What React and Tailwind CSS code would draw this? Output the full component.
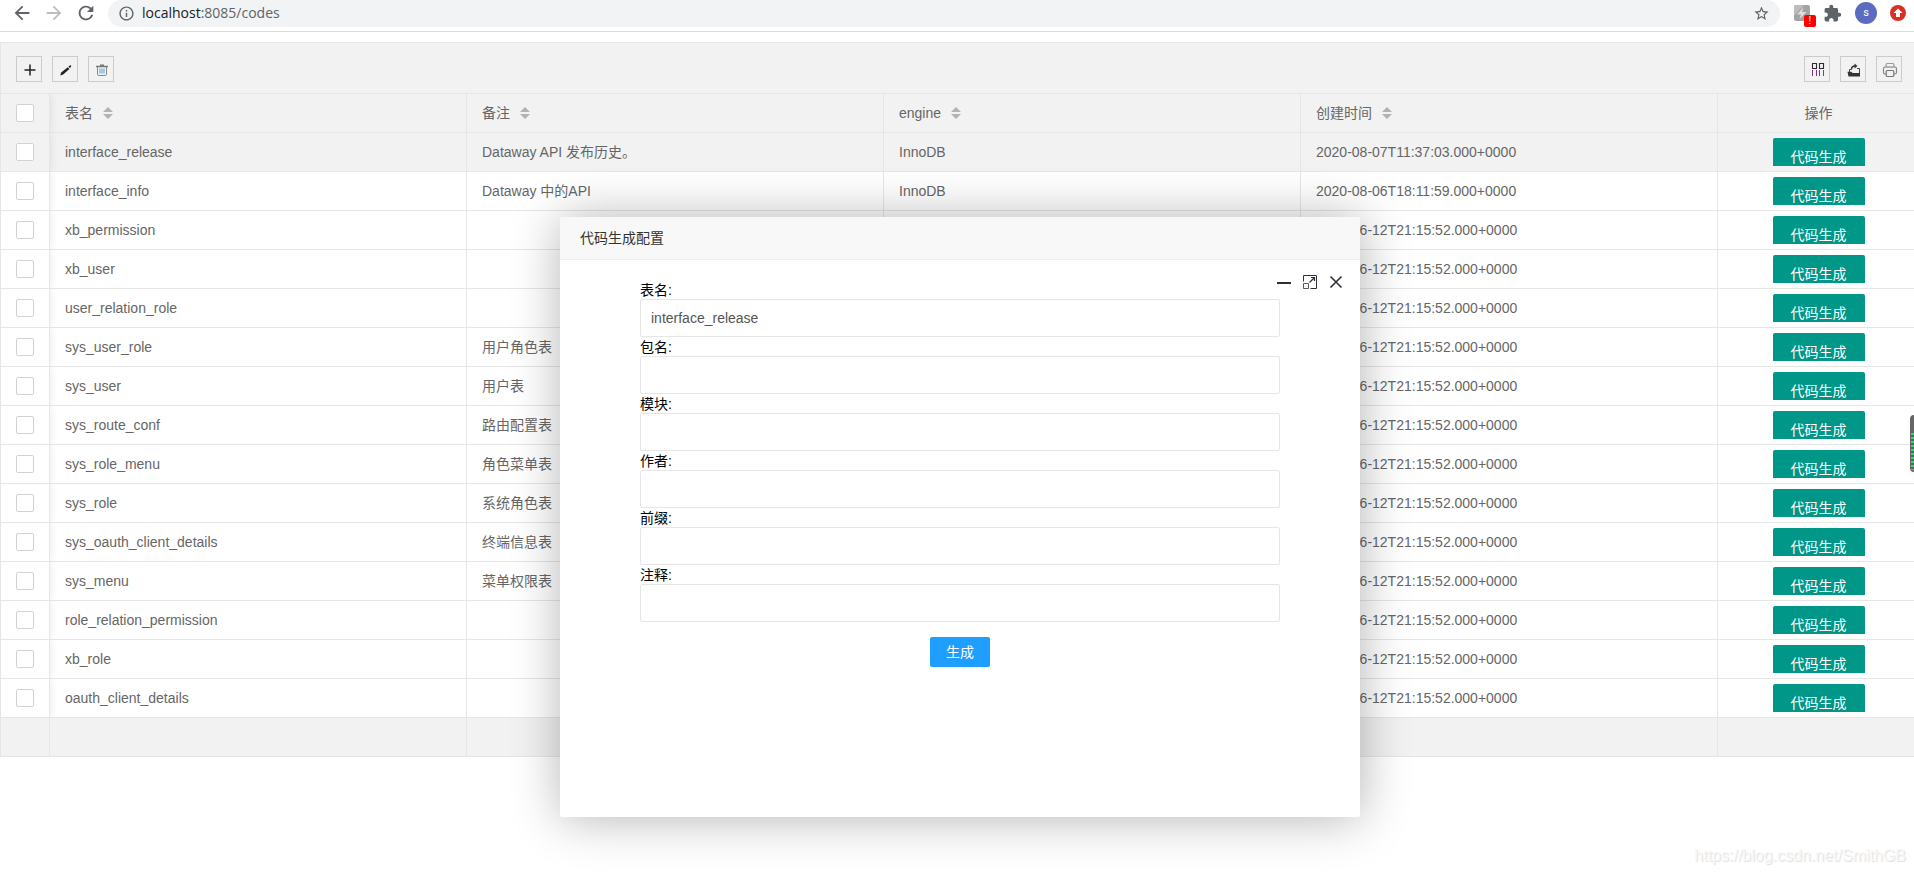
import React, { useState } from "react";
import {
  MdArrowBack,
  MdArrowForward,
  MdExtension,
  MdInfoOutline,
  MdRefresh,
  MdStarBorder,
} from "react-icons/md";

const OLD_TIME = "2020-06-12T21:15:52.000+0000";

const tables = [
  { name: "interface_release", comment: "Dataway API 发布历史。", time: "2020-08-07T11:37:03.000+0000" },
  { name: "interface_info", comment: "Dataway 中的API", time: "2020-08-06T18:11:59.000+0000" },
  { name: "xb_permission", comment: "", time: OLD_TIME },
  { name: "xb_user", comment: "", time: OLD_TIME },
  { name: "user_relation_role", comment: "", time: OLD_TIME },
  { name: "sys_user_role", comment: "用户角色表", time: OLD_TIME },
  { name: "sys_user", comment: "用户表", time: OLD_TIME },
  { name: "sys_route_conf", comment: "路由配置表", time: OLD_TIME },
  { name: "sys_role_menu", comment: "角色菜单表", time: OLD_TIME },
  { name: "sys_role", comment: "系统角色表", time: OLD_TIME },
  { name: "sys_oauth_client_details", comment: "终端信息表", time: OLD_TIME },
  { name: "sys_menu", comment: "菜单权限表", time: OLD_TIME },
  { name: "role_relation_permission", comment: "", time: OLD_TIME },
  { name: "xb_role", comment: "", time: OLD_TIME },
  { name: "oauth_client_details", comment: "", time: OLD_TIME },
];

const columns = ["表名", "备注", "engine", "创建时间"];

const fields = [
  { id: "tableName", label: "表名" },
  { id: "packageName", label: "包名" },
  { id: "moduleName", label: "模块" },
  { id: "author", label: "作者" },
  { id: "prefix", label: "前缀" },
  { id: "comments", label: "注释" },
];

const BrowserBar = () => (
  <header className="flex h-8 items-start border-b border-[#dadce0] bg-white pl-[11px] pr-2">
    <div className="flex h-[26px] items-center gap-2.5 text-[#5f6368]">
      <button aria-label="Back">
        <MdArrowBack size={22} />
      </button>
      <button aria-label="Forward" className="text-[#bcbec1]">
        <MdArrowForward size={22} />
      </button>
      <button aria-label="Reload">
        <MdRefresh size={22} />
      </button>
    </div>
    <div className="ml-[11px] flex h-[27px] flex-1 items-center rounded-full bg-[#f1f3f4] px-2.5 pb-px text-[#5f6368]">
      <MdInfoOutline size={17} />
      <p className="ml-[7px] flex-1 pb-px font-['Open_Sans',sans-serif] text-sm leading-5">
        <span className="text-[#202124]">localhost</span>:8085/codes
      </p>
      <button aria-label="Bookmark">
        <MdStarBorder size={17} />
      </button>
    </div>
    <div className="ml-3.5 flex h-[26px] items-center gap-[13px]">
      <button aria-label="Extension" className="relative">
        <svg width="16" height="16" viewBox="0 0 16 16">
          <rect width="16" height="16" rx="2" fill="#a3a3a3" />
          <path d="M0 2a2 2 0 0 1 2-2h8L0 11z" fill="#bdbdbd" />
          <path d="M9.500 2 3 9.500h4L5.500 14 12.500 7H8z" fill="#dedede" />
        </svg>
        <span className="absolute left-2.5 top-2.5 flex h-3 w-3 items-center justify-center rounded-xs bg-[#ff0000] text-[10px] leading-3 text-white">
          !
        </span>
      </button>
      <button aria-label="Extensions" className="text-[#5f6368]">
        <MdExtension size={19} />
      </button>
      <button className="h-[22px] w-[22px] rounded-full bg-[#5c6bc0] font-[Roboto,sans-serif] text-[11px] text-white">
        s
      </button>
      <button aria-label="Update">
        <svg width="16" height="16" viewBox="0 0 16 16">
          <circle cx="8" cy="8" r="8" fill="#d93025" />
          <path d="M8 3.500 12.500 8H10v4H6V8H3.500z" fill="#fff" />
        </svg>
      </button>
    </div>
  </header>
);

const ToolButton = ({ label, children }) => (
  <button
    aria-label={label}
    className="flex h-[26px] w-[26px] items-center justify-center border border-[#ccc] pl-0.5 pt-0.5"
  >
    <svg width="16" height="16" viewBox="0 0 16 16" fill="none">
      {children}
    </svg>
  </button>
);

const Toolbar = () => (
  <div className="flex justify-between border-b border-[#e6e6e6] bg-[#f2f2f2] pb-[11px] pl-[15px] pr-[18px] pt-[13px]">
    <div className="flex gap-2.5">
      <ToolButton label="新增">
        <path d="M8 2.500v11M2.500 8h11" stroke="#222" strokeWidth="1.5" />
      </ToolButton>
      <ToolButton label="编辑">
        <path d="m2.200 13.500 1-3 6.600-5.200 1.600 1.600-6.200 5.600z" fill="#222" />
        <path d="m10.500 4.800 1.200-1.200q.8-.6 1.300 0t0 1.200l-1.100 1.300z" fill="#222" />
      </ToolButton>
      <ToolButton label="删除">
        <path d="M2 4.500h12M6 3.200h4" stroke="#777" strokeWidth="1.6" />
        <path d="M3.500 5v7.200q0 1.300 1.300 1.300h6.400q1.300 0 1.300-1.300V5" stroke="#888" />
        <path d="M6 6.500v5M8 6.500v5M10 6.500v5" stroke="#5fa9dc" strokeWidth="1.1" />
      </ToolButton>
    </div>
    <div className="flex gap-2.5">
      <ToolButton label="筛选列">
        <path d="M2.500 1.500h4v5h-4zM9.500 1.500h4v5h-4z" stroke="#33283b" strokeWidth="1.1" />
        <path d="M2.500 8v6M6.500 8v6M9.500 8v6M13.500 8v6" stroke="#7a3a86" />
      </ToolButton>
      <ToolButton label="导出">
        <path d="M3.500 10V7.500h2M11 6.500h2.500V14" stroke="#444" />
        <path d="M5.500 7.500q0-3.500 3.500-3.500" stroke="#333" strokeWidth="1.3" />
        <path d="m8.500 1.500 3 2.500-3 2.500z" fill="#333" />
        <path d="M1.500 9.800h4l1 1.200H14v3.500H2.500z" fill="#333" />
      </ToolButton>
      <ToolButton label="打印">
        <path d="M4 5V3q0-1.500 1.500-1.500h5Q12 1.500 12 3v2" stroke="#999" strokeWidth="1.2" />
        <rect x="1.500" y="5" width="13" height="7" rx="1.800" stroke="#888" strokeWidth="1.2" />
        <path d="M4 5.200h8" stroke="#7fb2d8" />
        <rect x="4.200" y="8.500" width="7.600" height="6" rx="1" fill="#f2f2f2" stroke="#777" strokeWidth="1.2" />
      </ToolButton>
    </div>
  </div>
);

const Checkbox = ({ label }) => (
  <input
    type="checkbox"
    aria-label={label}
    className="block h-[18px] w-[18px] appearance-none rounded-xs border border-[#d2d2d2] bg-white checked:bg-[#5fb878]"
  />
);

const CodeTable = () => (
  <table className="w-full table-fixed border-separate border-spacing-0 text-left text-sm leading-7 text-[#666] [&_td]:border-b [&_td]:border-r [&_td]:border-[#e6e6e6] [&_td]:p-0 [&_th]:border-b [&_th]:border-r [&_th]:border-[#e6e6e6] [&_th]:p-0 [&_th]:font-normal">
    <colgroup>
      <col className="w-[49px]" />
      <col />
      <col />
      <col />
      <col />
      <col className="w-[202px]" />
    </colgroup>
    <thead>
      <tr className="h-[39px] bg-[#f2f2f2]">
        <th className="shadow-[1px_0_8px_rgba(0,0,0,0.08)] [clip-path:inset(0_-10px_0_0)]">
          <div className="pl-[15px]">
            <Checkbox label="全选" />
          </div>
        </th>
        {columns.map((title) => (
          <th key={title}>
            <div className="flex items-center gap-2.5 px-[15px]">
              {title}
              <button aria-label={`${title} 排序`}>
                <svg width="10" height="12" viewBox="0 0 10 12" fill="#b2b2b2">
                  <path d="M5 0l5 5H0zM0 7h10l-5 5z" />
                </svg>
              </button>
            </div>
          </th>
        ))}
        <th className="text-center">操作</th>
      </tr>
    </thead>
    <tbody>
      {tables.map((row, index) => (
        <tr key={row.name} className={index === 0 ? "h-[39px] bg-[#f2f2f2]" : "h-[39px]"}>
          <td className="shadow-[1px_0_8px_rgba(0,0,0,0.08)] [clip-path:inset(0_-10px_0_0)]">
            <div className="pl-[15px]">
              <Checkbox label={row.name} />
            </div>
          </td>
          <td>
            <div className="truncate px-[15px]">{row.name}</div>
          </td>
          <td>
            <div className="truncate px-[15px]">{row.comment}</div>
          </td>
          <td>
            <div className="truncate px-[15px]">InnoDB</div>
          </td>
          <td>
            <div className="truncate px-[15px]">{row.time}</div>
          </td>
          <td>
            {/* the cell is lower than the button, so its foot is cut off */}
            <div className="flex h-7 items-start justify-center overflow-hidden">
              <button className="h-[38px] shrink-0 rounded-xs bg-[#009688] px-[18px] leading-[38px] text-white">
                代码生成
              </button>
            </div>
          </td>
        </tr>
      ))}
    </tbody>
    <tfoot>
      <tr className="h-[39px] bg-[#f2f2f2]">
        <td />
        <td />
        <td />
        <td />
        <td />
        <td />
      </tr>
    </tfoot>
  </table>
);

const ConfigDialog = () => {
  const [values, setValues] = useState({ tableName: "interface_release" });

  const handleChange = (e) => {
    setValues({ ...values, [e.target.id]: e.target.value });
  };

  return (
    <section
      role="dialog"
      aria-labelledby="dialog-title"
      className="relative h-[600px] w-[800px] rounded-xs bg-white text-sm shadow-[1px_1px_50px_rgba(0,0,0,0.3)]"
    >
      <h2
        id="dialog-title"
        className="rounded-t-xs border-b border-[#eee] bg-[#f8f8f8] px-5 leading-[42px] text-[#333]"
      >
        代码生成配置
      </h2>
      <div className="absolute right-[17px] top-[57px] flex gap-3 text-[#2e2d3c]">
        <button aria-label="最小化">
          <svg width="14" height="16" viewBox="0 0 14 16">
            <path d="M0 9h14" stroke="currentColor" strokeWidth="2" />
          </svg>
        </button>
        <button aria-label="最大化">
          <svg width="14" height="16" viewBox="0 0 14 16" fill="none" stroke="currentColor">
            <path d="M.5 7.500V1.500h13v13H7.500" />
            <path d="M.5 9.500h5v5h-5z" strokeOpacity=".8" />
            <path d="M6.500 8.500 11.500 3.500M8 3.500h3.500V7" strokeWidth="1.2" />
          </svg>
        </button>
        <button aria-label="关闭">
          <svg width="14" height="16" viewBox="0 0 14 16">
            <path d="m1.500 2.500 11 11M12.500 2.500l-11 11" stroke="currentColor" strokeWidth="1.6" />
          </svg>
        </button>
      </div>
      <form className="mx-auto w-4/5 pt-5" onSubmit={(e) => e.preventDefault()}>
        {fields.map((field) => (
          <div key={field.id}>
            <label htmlFor={field.id} className="block h-[19px] leading-[21px] text-black">
              {field.label}:
            </label>
            <input
              id={field.id}
              type="text"
              value={values[field.id] || ""}
              onChange={handleChange}
              className="block h-[38px] w-full rounded-xs border border-[#e6e6e6] bg-white pl-2.5 text-[#555] outline-none"
            />
          </div>
        ))}
        <button
          type="submit"
          className="mx-auto mt-[15px] block h-[30px] rounded-xs bg-[#1e9fff] px-4 leading-[30px] text-white"
        >
          生成
        </button>
      </form>
    </section>
  );
};

const App = () => {
  return (
    <div className="relative min-h-screen overflow-hidden bg-white font-['Liberation_Sans','Noto_Sans_CJK_SC',sans-serif]">
      <BrowserBar />
      {/* the page runs slightly past the right edge of the window */}
      <main className="relative -mr-1.5 pt-2.5">
        <div className="border-l border-t border-[#e6e6e6]">
          <Toolbar />
          <CodeTable />
        </div>
        <div className="absolute inset-x-0 top-[185px] flex justify-center">
          <ConfigDialog />
        </div>
      </main>
      <div className="absolute right-0 top-[415px] h-[57px] w-1 overflow-hidden rounded-l-sm bg-[#666] pl-px pt-[18px] shadow-md">
        <div className="h-[37px] bg-[repeating-linear-gradient(#3fd07a_0_2px,#4d6b58_2px_4px)]" />
      </div>
      <p className="absolute bottom-1.5 right-2 text-base leading-6 text-[#f8f8f8] [text-shadow:1px_1px_1px_#ddd]">
        https://blog.csdn.net/SmithGB
      </p>
    </div>
  );
};

export default App;
